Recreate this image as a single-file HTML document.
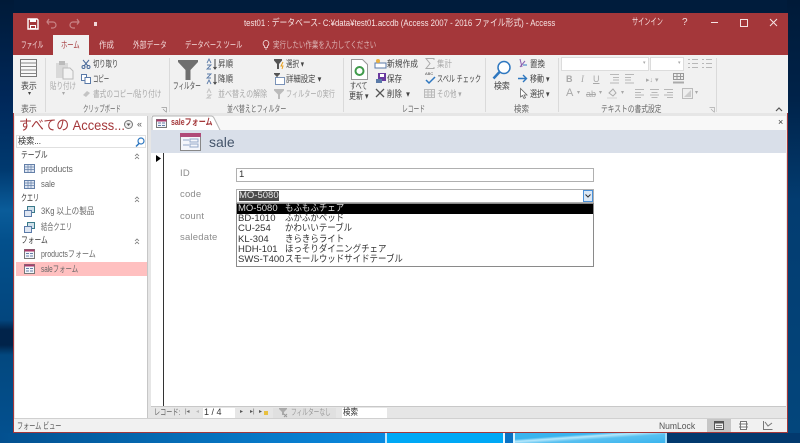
<!DOCTYPE html>
<html lang="ja"><head><meta charset="utf-8"><title>test01</title>
<style>
html,body{margin:0;padding:0;width:800px;height:443px;overflow:hidden;background:#001c3c}
body{font-family:"Liberation Sans","Noto Sans CJK JP",sans-serif}
#r{position:absolute;left:0;top:0;width:800px;height:443px;overflow:hidden;filter:blur(.3px);background:#001c3c}
.b{position:absolute}
.t{position:absolute;white-space:nowrap;line-height:11px;font-size:9px;color:#444;transform-origin:0 50%}
.g{color:#a8a8a8}
.k{color:#f4dcdc}
svg{position:absolute;overflow:visible}
.sep{position:absolute;width:1px;top:58px;height:54px;background:#dadada}
.lb{position:absolute;left:180px;font-size:9.5px;color:#8c8c8c;letter-spacing:.2px;line-height:11px}
.row{position:absolute;left:237px;width:355px;height:10.2px;font-size:9.5px;line-height:10.2px;color:#333;white-space:nowrap}
.row i{font-style:normal;position:absolute;left:1px}
.row b{font-weight:normal;position:absolute;left:48px;transform:scaleX(.89);transform-origin:0 50%}
</style></head><body>
<div id="r">
<div class="b" style="left:0;top:0;width:14px;height:433px;background:linear-gradient(180deg,#001a38 0,#00285a 100px,#003a70 170px,#0a5c9a 210px,#03508c 240px,#03467e 320px,#01234a 330px,#01234a 345px,#03487f 355px,#03508f 433px)"></div>
<div class="b" style="left:787px;top:0;width:13px;height:433px;background:linear-gradient(180deg,#001a38 0,#00234a 100px,#033c70 200px,#03467c 433px)"></div>
<div class="b" style="left:0;top:433px;width:387px;height:10px;background:linear-gradient(90deg,#03508f 0,#0568b0 150px,#0a8ae0 385px)"></div>
<div class="b" style="left:385px;top:433px;width:2px;height:10px;background:#bfe8ff"></div>
<div class="b" style="left:387px;top:433px;width:116px;height:10px;background:#00a8f5"></div>
<div class="b" style="left:503px;top:433px;width:2px;height:10px;background:#e8f8ff"></div>
<div class="b" style="left:505px;top:433px;width:8px;height:10px;background:#0a72c4"></div>
<div class="b" style="left:513px;top:433px;width:2px;height:10px;background:#d8f4ff"></div>
<div class="b" style="left:515px;top:433px;width:150px;height:10px;background:linear-gradient(176deg,#3ab4ee 30%,#b8e8fb 42%,#58c0f0 58%,#3ab4ee 100%)"></div>
<div class="b" style="left:665px;top:433px;width:2px;height:10px;background:#a0dcf8"></div>
<div class="b" style="left:667px;top:433px;width:133px;height:10px;background:#02396e"></div>

<!-- title -->
<div class="b" style="left:13px;top:13px;width:775px;height:42px;background:#a4373a"></div>
<div class="b" style="left:53px;top:35px;width:36px;height:20px;background:#f1f1f1"></div>
<!-- ribbon -->
<div class="b" style="left:13px;top:55px;width:775px;height:60px;background:#f1f1f1"></div>
<div class="b" style="left:13px;top:113px;width:775px;height:320px;background:#e6e6e6;border-bottom:1px solid #a4373a;box-sizing:border-box;border-left:1px solid #a4373a;border-right:1px solid #a4373a"></div>

<!-- QAT -->
<svg style="left:27px;top:18px" width="12" height="12" viewBox="0 0 12 12"><path d="M1 1h9l1 1v9H1z" fill="none" stroke="#fff" stroke-width="1.400"/><path d="M3 1h6v3H3zM3 7h6v4H3z" fill="#fff"/><path d="M4 8h4v2H4z" fill="#a4373a"/></svg>
<svg style="left:46px;top:18px" width="12" height="11" viewBox="0 0 12 11"><path d="M1 4h6a3 3 0 0 1 0 6H5M3 1L1 4l2 2.500" fill="none" stroke="#c98486" stroke-width="1.200"/></svg>
<svg style="left:68px;top:18px" width="12" height="11" viewBox="0 0 12 11"><path d="M11 4H5a3 3 0 0 0 0 6h2M9 1l2 3-2 2.500" fill="none" stroke="#c98486" stroke-width="1.200"/></svg>
<div class="b" style="left:94px;top:22px;width:3px;height:4px;background:#f0d8d8"></div>
<span class="t" style="left:244px;top:17.500px;font-size:9.500px;color:#f6e4e4;transform:scaleX(.82)">test01 : データベース- C:¥data¥test01.accdb (Access 2007 - 2016 ファイル形式) - Access</span>
<span class="t k" style="left:632px;top:17px;font-size:9.500px;transform:scaleX(.65)">サインイン</span>
<span class="t k" style="left:682px;top:17px;font-size:10px">?</span>
<div class="b" style="left:711px;top:22px;width:7px;height:1px;background:#f6e4e4"></div>
<div class="b" style="left:740px;top:19px;width:6px;height:6px;border:1px solid #f6e4e4"></div>
<svg style="left:769px;top:18px" width="9" height="9" viewBox="0 0 9 9"><path d="M1 1l7 7M8 1L1 8" stroke="#f6e4e4" fill="none"/></svg>
<!-- tabs -->
<span class="t k" style="left:21px;top:40px;transform:scaleX(.62)">ファイル</span>
<span class="t" style="left:61px;top:40px;color:#a4373a;transform:scaleX(.7)">ホーム</span>
<span class="t k" style="left:99px;top:40px;transform:scaleX(.83)">作成</span>
<span class="t k" style="left:133px;top:40px;transform:scaleX(.75)">外部データ</span>
<span class="t k" style="left:185px;top:40px;transform:scaleX(.69)">データベース ツール</span>
<svg style="left:262px;top:40px" width="8" height="10" viewBox="0 0 8 10"><path d="M4 .5a3 3 0 0 0-1.500 5.500V7.500h3V6A3 3 0 0 0 4 .5zM3 9h2" fill="none" stroke="#f6e4e4" stroke-width=".8"/></svg>
<span class="t" style="left:273px;top:40px;color:#ddb5b5;transform:scaleX(.72)">実行したい作業を入力してください</span>

<!-- ribbon: view -->
<svg style="left:20px;top:59px" width="18" height="18" viewBox="0 0 18 18"><rect x=".5" y=".5" width="16" height="17" fill="#f8f8f8" stroke="#777"/><path d="M.5 4h16M.5 7.500h16M.5 11h16M.5 14.500h16" stroke="#888"/></svg>
<span class="t" style="left:21px;top:81px;transform:scaleX(.88)">表示</span>
<span class="t" style="left:28px;top:91px;font-size:6px;line-height:7px">▾</span>
<span class="t" style="left:21px;top:104px;color:#666;transform:scaleX(.88)">表示</span>
<div class="sep" style="left:45px"></div>
<!-- clipboard -->
<svg style="left:55px;top:60px" width="19" height="20" viewBox="0 0 19 20"><rect x="1" y="3" width="12" height="15" fill="#d9d9d9"/><rect x="4" y="1" width="6" height="4" fill="#bbb"/><path d="M8 8h7l3 3v8H8z" fill="#f3f3f3" stroke="#bbb"/></svg>
<span class="t g" style="left:50px;top:81px;transform:scaleX(.72)">貼り付け</span>
<span class="t g" style="left:62px;top:91px;font-size:6px;line-height:7px">▾</span>
<svg style="left:81px;top:59px" width="10" height="10" viewBox="0 0 10 10"><path d="M2 1l5 6M8 1L3 7" stroke="#4a6a9a" fill="none"/><circle cx="2.500" cy="8" r="1.500" fill="none" stroke="#4a6a9a"/><circle cx="7.500" cy="8" r="1.500" fill="none" stroke="#4a6a9a"/></svg>
<span class="t" style="left:93px;top:59px;transform:scaleX(.7)">切り取り</span>
<svg style="left:81px;top:74px" width="10" height="10" viewBox="0 0 10 10"><path d="M.5.500h5v6h-5z" fill="#fff" stroke="#5a7aa8"/><path d="M4 3.500h5.500v6H4z" fill="#fff" stroke="#5a7aa8"/></svg>
<span class="t" style="left:93px;top:74px;transform:scaleX(.6)">コピー</span>
<svg style="left:82px;top:89px" width="9" height="9" viewBox="0 0 9 9"><path d="M1 6l4-4 3 2-4 4z" fill="#c4c4c4"/></svg>
<span class="t g" style="left:93px;top:89px;transform:scaleX(.74)">書式のコピー/貼り付け</span>
<span class="t" style="left:83px;top:103.500px;color:#666;transform:scaleX(.6)">クリップボード</span>
<svg style="left:161px;top:107px" width="6" height="6" viewBox="0 0 6 6"><path d="M.5.500h5v5M2 2l3 3" fill="none" stroke="#999" stroke-width=".7"/></svg>
<div class="sep" style="left:169px"></div>
<!-- sort -->
<svg style="left:178px;top:59px" width="20" height="22" viewBox="0 0 20 22"><path d="M0 1h20v2l-7.500 8v10h-5V11L0 3z" fill="#6f6f6f"/></svg>
<span class="t" style="left:173px;top:81px;transform:scaleX(.62)">フィルター</span>
<svg style="left:206px;top:58px" width="11" height="12" viewBox="0 0 11 12"><path d="M1 5l2-4 2 4M1 7h4L1 11h4" fill="none" stroke="#5a7aa8" stroke-width=".9"/><path d="M9 1v10M7.500 9L9 11l1.500-2" fill="none" stroke="#444"/></svg>
<span class="t" style="left:218px;top:59px;transform:scaleX(.83)">昇順</span>
<svg style="left:206px;top:73px" width="11" height="12" viewBox="0 0 11 12"><path d="M1 1h4L1 5h4M1 11l2-4 2 4" fill="none" stroke="#5a7aa8" stroke-width=".9"/><path d="M9 1v10M7.500 9L9 11l1.500-2" fill="none" stroke="#444"/></svg>
<span class="t" style="left:218px;top:74px;transform:scaleX(.83)">降順</span>
<svg style="left:206px;top:88px" width="11" height="11" viewBox="0 0 11 11"><path d="M1 5l2-4 2 4M1 7h4L1 10h4" fill="none" stroke="#c4c4c4"/></svg>
<span class="t g" style="left:218px;top:89px;transform:scaleX(.78)">並べ替えの解除</span>
<svg style="left:274px;top:59px" width="11" height="11" viewBox="0 0 11 11"><path d="M0 0h8v1.500L5 5v5H3V5L0 1.500z" fill="#555"/><path d="M9 3L7 7h2l-1 3" fill="none" stroke="#e8a020"/></svg>
<span class="t" style="left:286px;top:59px;transform:scaleX(.72)">選択 ▾</span>
<svg style="left:274px;top:73px" width="11" height="12" viewBox="0 0 11 12"><path d="M0 0h6v1L3.500 3.500V6H2.500V3.500L0 1z" fill="#555"/><rect x="1.500" y="4.500" width="9" height="7" fill="#fff" stroke="#5a7aa8" stroke-width=".8"/></svg>
<span class="t" style="left:286px;top:74px;transform:scaleX(.82)">詳細設定 ▾</span>
<svg style="left:274px;top:89px" width="10" height="10" viewBox="0 0 10 10"><path d="M0 0h10v1.500L6 5.500V10H4V5.500L0 1.500z" fill="#bbb"/></svg>
<span class="t g" style="left:286px;top:89px;transform:scaleX(.68)">フィルターの実行</span>
<span class="t" style="left:227px;top:103.500px;color:#666;transform:scaleX(.66)">並べ替えとフィルター</span>
<div class="sep" style="left:343px"></div>
<!-- records -->
<svg style="left:351px;top:59px" width="17" height="21" viewBox="0 0 17 21"><path d="M.5.500h11l5 5v15H.5z" fill="#fff" stroke="#999"/><circle cx="8.500" cy="12" r="4" fill="none" stroke="#3f9a4a" stroke-width="2"/></svg>
<span class="t" style="left:350px;top:81px;transform:scaleX(.67)">すべて</span>
<span class="t" style="left:349px;top:91px;transform:scaleX(.78)">更新 ▾</span>
<svg style="left:375px;top:59px" width="11" height="10" viewBox="0 0 11 10"><rect x="0" y="4" width="11" height="5" fill="#fff" stroke="#5a7aa8"/><circle cx="3" cy="2" r="2" fill="#e8b040"/></svg>
<span class="t" style="left:387px;top:59px;transform:scaleX(.86)">新規作成</span>
<svg style="left:376px;top:73px" width="10" height="11" viewBox="0 0 10 11"><path d="M2 0h8v8H2z" fill="#6a3aa0"/><rect x="4" y="1" width="4" height="3" fill="#fff"/><rect x="0" y="6" width="6" height="4" fill="#5a7aa8"/></svg>
<span class="t" style="left:387px;top:74px;transform:scaleX(.83)">保存</span>
<svg style="left:375px;top:88px" width="10" height="10" viewBox="0 0 10 10"><path d="M1 1l8 8M9 1L1 9" stroke="#555" stroke-width="1.300"/></svg>
<span class="t" style="left:387px;top:89px;transform:scaleX(.83)">削除 &nbsp;▾</span>
<svg style="left:425px;top:58px" width="10" height="11" viewBox="0 0 10 11"><path d="M9 2V.5H1L5 5.500 1 10.500h8V9" fill="none" stroke="#aaa"/></svg>
<span class="t g" style="left:437px;top:59px;transform:scaleX(.83)">集計</span>
<svg style="left:425px;top:74px" width="11" height="11" viewBox="0 0 11 11"><path d="M1 6l3 3 6-6" fill="none" stroke="#2f78c0" stroke-width="1.500"/></svg>
<span class="t" style="left:425px;top:71px;font-size:4px;line-height:5px">ABC</span>
<span class="t" style="left:437px;top:74px;transform:scaleX(.68)">スペル チェック</span>
<svg style="left:424px;top:89px" width="11" height="9" viewBox="0 0 11 9"><rect x=".5" y=".5" width="10" height="8" fill="#eee" stroke="#bbb"/><path d="M.5 3h10M.5 6h10M4 .5v8M7.500 .5v8" stroke="#bbb"/></svg>
<span class="t g" style="left:437px;top:89px;transform:scaleX(.72)">その他 ▾</span>
<span class="t" style="left:402px;top:103.500px;color:#666;transform:scaleX(.64)">レコード</span>
<div class="sep" style="left:485px"></div>
<!-- find -->
<svg style="left:492px;top:60px" width="20" height="20" viewBox="0 0 20 20"><circle cx="12" cy="7.500" r="6" fill="#fff" stroke="#2f78c0" stroke-width="1.500"/><path d="M7.500 12L1.500 18.500" stroke="#2f78c0" stroke-width="2.500"/></svg>
<span class="t" style="left:494px;top:81px;transform:scaleX(.88)">検索</span>
<svg style="left:517px;top:58px" width="11" height="11" viewBox="0 0 11 11"><path d="M3 1l2 8M8 3L3 9" stroke="#8a60b0" fill="none"/><path d="M6 7h4" stroke="#2f78c0"/></svg>
<span class="t" style="left:530px;top:59px;transform:scaleX(.83)">置換</span>
<svg style="left:518px;top:74px" width="10" height="9" viewBox="0 0 10 9"><path d="M0 4.500h8M5 1l3.500 3.500L5 8" fill="none" stroke="#2f78c0" stroke-width="1.400"/></svg>
<span class="t" style="left:530px;top:74px;transform:scaleX(.78)">移動 ▾</span>
<svg style="left:520px;top:88px" width="8" height="11" viewBox="0 0 8 11"><path d="M.5.500v8.500l2-1.500 1.500 3 1.500-.8-1.500-2.700h3z" fill="#fff" stroke="#666" stroke-width=".8"/></svg>
<span class="t" style="left:530px;top:89px;transform:scaleX(.78)">選択 ▾</span>
<span class="t" style="left:514px;top:103.500px;color:#666;transform:scaleX(.83)">検索</span>
<div class="sep" style="left:558px"></div>
<!-- text format -->
<div class="b" style="left:561px;top:57px;width:88px;height:14px;background:#fff;border:1px solid #dcdcdc;box-sizing:border-box"></div>
<div class="b" style="left:650px;top:57px;width:34px;height:14px;background:#fff;border:1px solid #dcdcdc;box-sizing:border-box"></div>
<span class="t g" style="left:643px;top:60px;font-size:5px;line-height:7px">▾</span>
<span class="t g" style="left:678px;top:60px;font-size:5px;line-height:7px">▾</span>
<svg style="left:688px;top:58px" width="24" height="11" viewBox="0 0 24 11"><path d="M0 1.500h2M4 1.500h6M0 5.500h2M4 5.500h6M0 9.500h2M4 9.500h6M14 1.500h2M18 1.500h6M14 5.500h2M18 5.500h6M14 9.500h2M18 9.500h6" stroke="#b8b8b8"/></svg>
<span class="t g" style="left:566px;top:74px;font-weight:bold">B</span>
<span class="t g" style="left:581px;top:74px;font-style:italic;font-family:'Liberation Serif',serif">I</span>
<span class="t g" style="left:593px;top:74px;text-decoration:underline">U</span>
<svg style="left:607px;top:74px" width="30" height="10" viewBox="0 0 30 10"><path d="M3 .5h9M6 3.500h6M6 6h6M3 9h9M18 .5h9M18 3.500h6M18 6h6M18 9h9" stroke="#b8b8b8"/></svg>
<span class="t g" style="left:646px;top:75px;font-size:7px">▸↓ ▾</span>
<svg style="left:673px;top:73px" width="12" height="11" viewBox="0 0 12 11"><rect x=".5" y=".5" width="10" height="6" fill="#eee" stroke="#999"/><path d="M.5 3.500h10M4 .5v6M7.500 .5v6" stroke="#999"/><path d="M0 9.500h11" stroke="#aaa" stroke-width="2"/></svg>
<span class="t g" style="left:566px;top:88px;font-size:11px">A</span>
<span class="t g" style="left:577px;top:90px;font-size:6px;line-height:7px">▾</span>
<span class="t g" style="left:586px;top:89px;text-decoration:line-through">ab</span>
<span class="t g" style="left:599px;top:90px;font-size:6px;line-height:7px">▾</span>
<svg style="left:607px;top:88px" width="11" height="11" viewBox="0 0 11 11"><path d="M2 5l4-4 3 4-3 3z" fill="#eee" stroke="#aaa"/><path d="M0 10h10" stroke="#ddd" stroke-width="1.500"/></svg>
<span class="t g" style="left:621px;top:90px;font-size:6px;line-height:7px">▾</span>
<svg style="left:635px;top:89px" width="39" height="9" viewBox="0 0 39 9"><path d="M0 .5h9M0 3.500h6M0 6h9M0 8.500h6M15 .5h9M16.500 3.500h6M15 6h9M16.500 8.500h6M29 .5h9M32 3.500h6M29 6h9M32 8.500h6" stroke="#b8b8b8"/></svg>
<svg style="left:682px;top:88px" width="11" height="11" viewBox="0 0 11 11"><path d="M.5.500h10v10H.5z" fill="#eee" stroke="#bbb"/><path d="M2 9l7-7v7z" fill="#ccc"/></svg>
<span class="t g" style="left:695px;top:90px;font-size:6px;line-height:7px">▾</span>
<span class="t" style="left:601px;top:103.500px;color:#666;transform:scaleX(.75)">テキストの書式設定</span>
<svg style="left:709px;top:107px" width="6" height="6" viewBox="0 0 6 6"><path d="M.5.500h5v5M2 2l3 3" fill="none" stroke="#aaa" stroke-width=".7"/></svg>
<div class="sep" style="left:716px"></div>
<svg style="left:775px;top:107px" width="8" height="5" viewBox="0 0 8 5"><path d="M1 4l3-3 3 3" fill="none" stroke="#555" stroke-width="1.200"/></svg>

<!-- nav pane -->
<div class="b" style="left:15px;top:116px;width:132px;height:302px;background:#fff;border-right:1px solid #c6c6c6"></div>
<span class="t" style="left:19px;top:118px;font-size:14px;line-height:15px;color:#a4373a;transform:scaleX(.92)">すべての Access...</span>
<svg style="left:124px;top:120px" width="9" height="9" viewBox="0 0 9 9"><circle cx="4.500" cy="4.500" r="4" fill="#eee" stroke="#777"/><path d="M2.500 3.500h4L4.500 6z" fill="#555"/></svg>
<span class="t" style="left:137px;top:119px;color:#555">«</span>
<div class="b" style="left:16px;top:135px;width:130px;height:13px;background:#fff;border:1px solid #e0e0e0;box-sizing:border-box"></div>
<span class="t" style="left:18px;top:136px;color:#333;transform:scaleX(.9)">検索...</span>
<svg style="left:135px;top:137px" width="10" height="10" viewBox="0 0 10 10"><circle cx="6" cy="4" r="3" fill="#fff" stroke="#2f78c0" stroke-width="1.200"/><path d="M4 6.500L1 9.500" stroke="#2f78c0" stroke-width="1.500"/></svg>
<span class="t" style="left:21px;top:150px;color:#333;transform:scaleX(.75)">テーブル</span>
<svg style="left:134px;top:153px" width="6" height="6" viewBox="0 0 6 6"><path d="M1 3l2-2 2 2M1 6l2-2 2 2" fill="none" stroke="#777" stroke-width=".8"/></svg>
<span class="t" style="left:21px;top:193px;color:#333;transform:scaleX(.67)">クエリ</span>
<svg style="left:134px;top:196px" width="6" height="6" viewBox="0 0 6 6"><path d="M1 3l2-2 2 2M1 6l2-2 2 2" fill="none" stroke="#777" stroke-width=".8"/></svg>
<span class="t" style="left:21px;top:235px;color:#333;transform:scaleX(.75)">フォーム</span>
<svg style="left:134px;top:238px" width="6" height="6" viewBox="0 0 6 6"><path d="M1 3l2-2 2 2M1 6l2-2 2 2" fill="none" stroke="#777" stroke-width=".8"/></svg>
<div class="b" style="left:16px;top:262px;width:131px;height:14px;background:#ffc0c0"></div>
<svg style="left:24px;top:164px" width="11" height="9" viewBox="0 0 11 9"><rect x=".5" y=".5" width="10" height="8" fill="#dfe6f2" stroke="#6480a8"/><path d="M.5 3h10M.5 5.500h10M4 .5v8M7 .5v8" stroke="#6480a8" stroke-width=".7"/></svg>
<svg style="left:24px;top:180px" width="11" height="9" viewBox="0 0 11 9"><rect x=".5" y=".5" width="10" height="8" fill="#dfe6f2" stroke="#6480a8"/><path d="M.5 3h10M.5 5.500h10M4 .5v8M7 .5v8" stroke="#6480a8" stroke-width=".7"/></svg>
<svg style="left:24px;top:206px" width="11" height="11" viewBox="0 0 11 11"><rect x="3.500" y=".5" width="7" height="6" fill="#cfe0ea" stroke="#3a7a8a"/><rect x=".5" y="4.500" width="7" height="6" fill="#dfe6f2" stroke="#5a7aa8"/></svg>
<svg style="left:24px;top:222px" width="11" height="11" viewBox="0 0 11 11"><rect x="3.500" y=".5" width="7" height="6" fill="#cfe0ea" stroke="#3a7a8a"/><rect x=".5" y="4.500" width="7" height="6" fill="#dfe6f2" stroke="#5a7aa8"/></svg>
<svg style="left:24px;top:249px" width="11" height="10" viewBox="0 0 11 10"><rect x=".5" y=".5" width="10" height="9" fill="#f3f5fa" stroke="#777"/><path d="M.5 1.500h10" stroke="#a83a6a" stroke-width="2"/><path d="M2 4.500h3M2 7h3M6 4.500h3M6 7h3" stroke="#6480a8"/></svg>
<svg style="left:24px;top:264px" width="11" height="10" viewBox="0 0 11 10"><rect x=".5" y=".5" width="10" height="9" fill="#f3f5fa" stroke="#777"/><path d="M.5 1.500h10" stroke="#a83a6a" stroke-width="2"/><path d="M2 4.500h3M2 7h3M6 4.500h3M6 7h3" stroke="#6480a8"/></svg>
<span class="t" style="left:41px;top:164px;color:#666;transform:scaleX(.92)">products</span>
<span class="t" style="left:41px;top:179px;color:#666;transform:scaleX(.85)">sale</span>
<span class="t" style="left:41px;top:206px;color:#666;transform:scaleX(.84)">3Kg 以上の製品</span>
<span class="t" style="left:41px;top:222px;color:#666;transform:scaleX(.69)">結合クエリ</span>
<span class="t" style="left:41px;top:249px;color:#666;transform:scaleX(.78)">productsフォーム</span>
<span class="t" style="left:41px;top:264px;color:#666;transform:scaleX(.71)">saleフォーム</span>

<!-- doc area -->
<div class="b" style="left:151px;top:116px;width:635px;height:14px;background:#f8f8f8"></div>
<svg style="left:151px;top:116px" width="70" height="15" viewBox="0 0 70 15"><path d="M1 15V2q0-2 2-2h57q2 0 3 2l6 12v1z" fill="#fff" stroke="#b5b5b5"/></svg>
<svg style="left:156px;top:119px" width="11" height="9" viewBox="0 0 11 9"><rect x=".5" y=".5" width="10" height="8" fill="#f3f5fa" stroke="#777"/><path d="M.5 1.500h10" stroke="#a83a6a" stroke-width="2"/><path d="M2 4h3M2 6.500h3M6 4h3M6 6.500h3" stroke="#6480a8"/></svg>
<span class="t" style="left:171px;top:117px;color:#a4373a;font-weight:bold;transform:scaleX(.78)">saleフォーム</span>
<span class="t" style="left:778px;top:117px;color:#333">×</span>
<div class="b" style="left:151px;top:130px;width:635px;height:23px;background:#d9dfe9"></div>
<svg style="left:180px;top:133px" width="21" height="18" viewBox="0 0 21 18"><rect x=".5" y=".5" width="20" height="17" fill="#f4f6fb" stroke="#888"/><path d="M0 2h21" stroke="#b04a78" stroke-width="4"/><path d="M3 7h6M3 12h6" stroke="#93a8c8"/><rect x="10" y="6" width="8" height="3" fill="none" stroke="#93a8c8"/><rect x="10" y="11" width="8" height="3" fill="none" stroke="#93a8c8"/></svg>
<span class="t" style="left:209px;top:135px;font-size:14px;line-height:15px;color:#44546a">sale</span>
<div class="b" style="left:151px;top:153px;width:635px;height:254px;background:#fff"></div>
<div class="b" style="left:163px;top:153px;width:1px;height:254px;background:#333"></div>
<svg style="left:156px;top:155px" width="5" height="7" viewBox="0 0 5 7"><path d="M0 0l5 3.500L0 7z" fill="#000"/></svg>
<span class="lb" style="top:168px">ID</span>
<span class="lb" style="top:189px">code</span>
<span class="lb" style="top:211px">count</span>
<span class="lb" style="top:232px">saledate</span>
<div class="b" style="left:236px;top:168px;width:358px;height:14px;background:#fff;border:1px solid #b0b0b0;box-sizing:border-box"></div>
<span class="t" style="left:239px;top:169px;font-size:9.500px;color:#333">1</span>
<div class="b" style="left:236px;top:189px;width:358px;height:14px;background:#fff;border:1px solid #b0b0b0;box-sizing:border-box"></div>
<div class="b" style="left:239px;top:191px;width:40px;height:10px;background:#4a4a4a"></div>
<span class="t" style="left:239px;top:190px;font-size:9.500px;color:#e8e8e8">MO-5080</span>
<div class="b" style="left:583px;top:190px;width:10px;height:12px;background:#dbe8f6;border:1px solid #4a90d8;box-sizing:border-box"></div>
<svg style="left:585px;top:194px" width="6" height="4" viewBox="0 0 6 4"><path d="M.5.500L3 3 5.500.500" fill="none" stroke="#333"/></svg>
<!-- list -->
<div class="b" style="left:236px;top:203px;width:358px;height:64px;background:#fff;border:1px solid #8a8a8a;box-sizing:border-box"></div>
<div class="b" style="left:237px;top:204px;width:356px;height:10px;background:#000"></div>
<div class="row" style="top:204px;color:#ddd"><i>MO-5080</i><b>もふもふチェア</b></div>
<div class="row" style="top:214.200px"><i>BD-1010</i><b>ふかふかベッド</b></div>
<div class="row" style="top:224.400px"><i>CU-254</i><b>かわいいテーブル</b></div>
<div class="row" style="top:234.600px"><i>KL-304</i><b>きらきらライト</b></div>
<div class="row" style="top:244.800px"><i>HDH-101</i><b>ほっそりダイニングチェア</b></div>
<div class="row" style="top:255px"><i>SWS-T400</i><b>スモールウッドサイドテーブル</b></div>

<!-- record nav -->
<div class="b" style="left:151px;top:406px;width:635px;height:12px;background:#e6e6e6;border-top:1px solid #c8c8c8"></div>
<span class="t" style="left:154px;top:407px;font-size:8.500px;color:#666;transform:scaleX(.72)">レコード:</span>
<span class="t" style="left:185px;top:408px;font-size:6px;line-height:9px;color:#666">|◂</span>
<span class="t" style="left:196px;top:408px;font-size:6px;line-height:9px;color:#bbb">◂</span>
<div class="b" style="left:203px;top:408px;width:32px;height:10px;background:#fff"></div>
<span class="t" style="left:204px;top:407px;color:#333">1 / 4</span>
<span class="t" style="left:240px;top:408px;font-size:6px;line-height:9px;color:#555">▸</span>
<span class="t" style="left:250px;top:408px;font-size:6px;line-height:9px;color:#555">▸|</span>
<span class="t" style="left:259px;top:408px;font-size:6px;line-height:9px;color:#555">▸</span>
<div class="b" style="left:264px;top:411px;width:4px;height:4px;background:#e8c040"></div>
<div class="b" style="left:273px;top:408px;width:63px;height:10px;background:#e0e0e0"></div>
<svg style="left:279px;top:408px" width="9" height="10" viewBox="0 0 9 10"><path d="M0 0h8v1L5 4v3H3V4L0 1z" fill="#aaa"/><path d="M5 6l3 3M8 6L5 9" stroke="#999"/></svg>
<span class="t" style="left:291px;top:407px;font-size:8.500px;color:#999;transform:scaleX(.67)">フィルターなし</span>
<div class="b" style="left:342px;top:408px;width:45px;height:10px;background:#fff"></div>
<span class="t" style="left:343px;top:407px;color:#333;transform:scaleX(.83)">検索</span>
<!-- status -->
<div class="b" style="left:14px;top:418px;width:773px;height:14px;background:#f1f1f1;border-top:1px solid #d0d0d0;box-sizing:border-box"></div>
<span class="t" style="left:17px;top:421px;color:#555;transform:scaleX(.68)">フォーム ビュー</span>
<span class="t" style="left:659px;top:421px;color:#555;transform:scaleX(.95)">NumLock</span>
<div class="b" style="left:707px;top:419px;width:24px;height:13px;background:#c6c6c6"></div>
<svg style="left:714px;top:421px" width="10" height="9" viewBox="0 0 10 9"><rect x=".5" y=".5" width="9" height="8" fill="#eee" stroke="#555"/><path d="M0 1.500h10" stroke="#555" stroke-width="2"/><path d="M2 4.500h6M2 6.500h6" stroke="#777"/></svg>
<svg style="left:739px;top:421px" width="9" height="9" viewBox="0 0 9 9"><rect x="1.500" y=".5" width="6" height="8" fill="#fff" stroke="#777"/><path d="M0 3h9M0 6h9" stroke="#777"/></svg>
<svg style="left:763px;top:421px" width="10" height="9" viewBox="0 0 10 9"><path d="M.5 0v8.500h9M2 1l3 4 4-3" fill="none" stroke="#777"/></svg>
</div>
</body></html>
